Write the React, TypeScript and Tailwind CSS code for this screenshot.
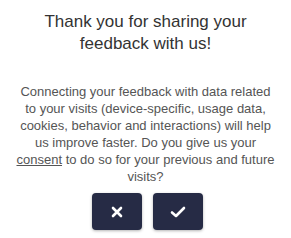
export default function App() {
  return (
    <div className="w-[291px] h-[238px] bg-white px-4 pt-[11px] text-center" style={{ fontFamily: '"Liberation Sans", Arial, sans-serif' }}>
      <h1 className="text-[17px] leading-[22px] text-[#333333]">Thank you for sharing your feedback with us!</h1>
      <p className="mt-[28px] text-[13px] leading-[17px] text-[#555555]">
        Connecting your feedback with data related to your visits (device-specific, usage data, cookies, behavior and interactions) will help us improve faster. Do you give us your{' '}
        <span className="underline">consent</span> to do so for your previous and future visits?
      </p>
      <div className="mt-[8px] pl-[4px] flex justify-center gap-[11px]">
        <button className="w-[50px] h-[37px] rounded-[4px] bg-[#262b45] shadow-[0_1px_3px_rgba(0,0,0,0.3)] flex items-center justify-center">
          <svg width="12" height="12" viewBox="0 0 12 12" fill="none" stroke="white" strokeWidth="2.6" strokeLinecap="round">
            <path d="M2 2L10 10M10 2L2 10" />
          </svg>
        </button>
        <button className="w-[50px] h-[37px] rounded-[4px] bg-[#262b45] shadow-[0_1px_3px_rgba(0,0,0,0.3)] flex items-center justify-center">
          <svg width="16" height="12" viewBox="0 0 16 12" fill="none" stroke="white" strokeWidth="2.6" strokeLinecap="round" strokeLinejoin="round">
            <path d="M2 6.5L6 10L14 2" />
          </svg>
        </button>
      </div>
    </div>
  );
}
